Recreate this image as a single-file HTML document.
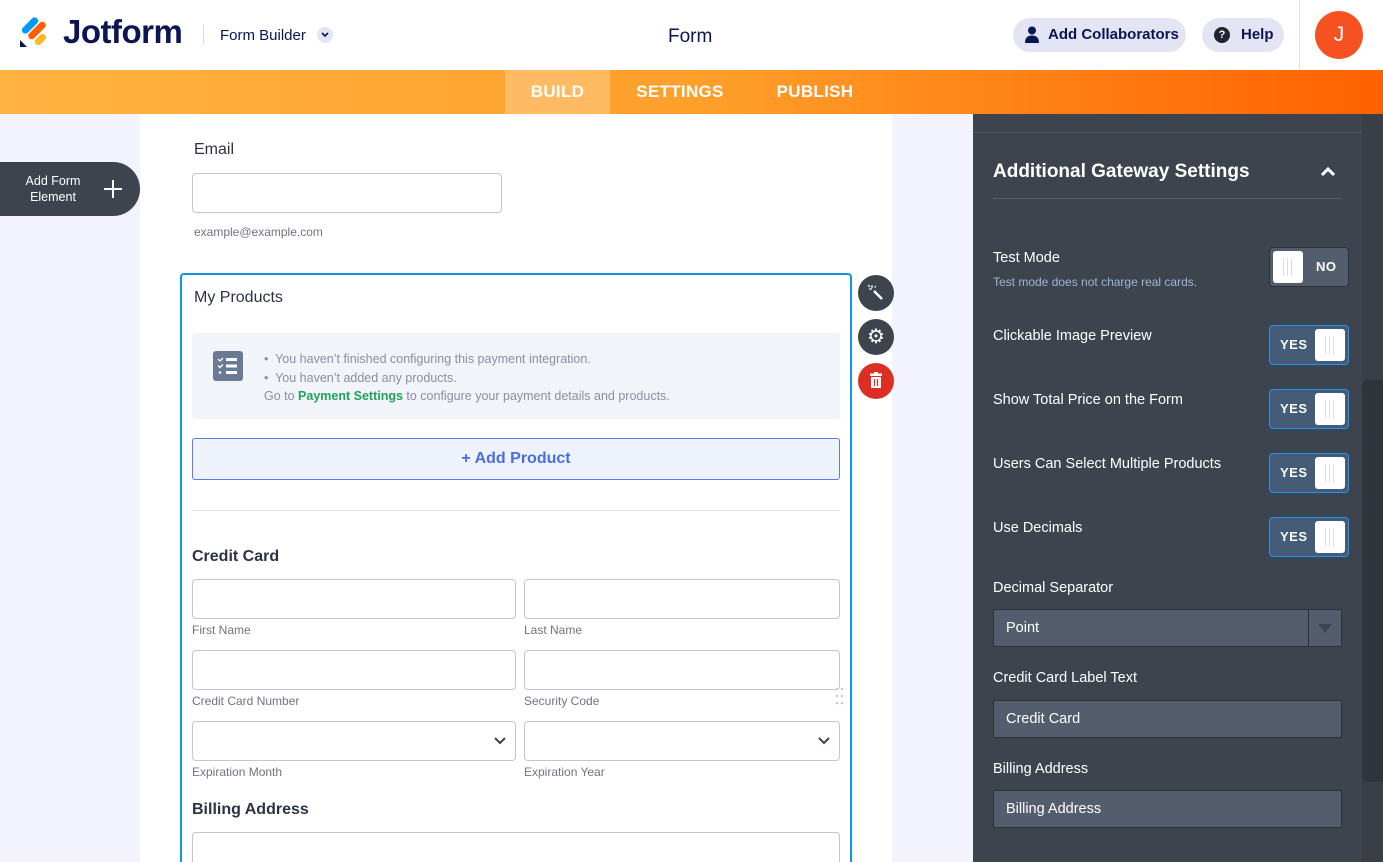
<!DOCTYPE html>
<html><head><meta charset="utf-8"><style>
*{box-sizing:border-box;margin:0;padding:0}
html,body{width:1383px;height:862px;overflow:hidden}
body{font-family:"Liberation Sans",sans-serif;background:#f3f3fe;position:relative}
.hdr{position:absolute;left:0;top:0;width:1383px;height:70px;background:#fff}
.bar{position:absolute;left:0;top:70px;width:1383px;height:44px;background:linear-gradient(90deg,#ffb340,#ffa02b 50%,#ff6100)}
.tab{position:absolute;top:70px;height:44px;line-height:44px;color:#fff;font-size:17px;font-weight:bold;text-align:center;letter-spacing:.3px}
.abs{position:absolute}
.card{position:absolute;left:140px;top:114px;width:752px;height:748px;background:#fff}
.inp{position:absolute;border:1px solid #c3c5d4;border-radius:4px;background:#fff}
.sub{position:absolute;font-size:12px;color:#6f7486}
.rp{position:absolute;left:973px;top:114px;width:410px;height:748px;background:#3e444e}
.lbl{position:absolute;left:993px;color:#fff;font-size:14.5px}
.tg{position:absolute;left:1269px;width:80px;height:40px;border-radius:4px;border:1px solid #1a97f5;background:#445c78}
.tg b{position:absolute;left:10px;top:11px;color:#fff;font-size:13px;letter-spacing:.5px}
.knob{position:absolute;width:30px;height:32px;top:3px;background:#fff;border-radius:3px}
.knob i{position:absolute;top:7px;width:1px;height:18px;background:#ddd}
.dinp{position:absolute;left:993px;width:349px;height:38px;background:#535d6e;border:1px solid #2c3038;border-radius:2px;color:#fff;font-size:14.5px;padding:10px 12px}
</style></head><body>
<div class="hdr"></div>
<svg class="abs" style="left:18px;top:16px" width="32" height="32" viewBox="0 0 32 32">
<rect x="2" y="6" width="20" height="7" rx="3.5" transform="rotate(-45 12 9.5)" fill="#0099ff"/>
<rect x="8" y="11" width="22" height="7" rx="3.5" transform="rotate(-45 19 14.5)" fill="#ff6100"/>
<rect x="16" y="20" width="13" height="7" rx="3.5" transform="rotate(-45 22.5 23.5)" fill="#ffb629"/>
<path d="M2 24 L9 31 L2 31 Z" fill="#0a1551"/>
</svg>
<div class="abs" style="left:63px;top:13px;font-size:33px;font-weight:bold;color:#0a1551;letter-spacing:-.5px">Jotform</div>
<div class="abs" style="left:203px;top:25px;width:1px;height:20px;background:#d8dae6"></div>
<div class="abs" style="left:220px;top:27px;font-size:15px;color:#0a1551">Form Builder</div>
<div class="abs" style="left:317px;top:27px;width:16px;height:16px;border-radius:50%;background:#e3e5f5"></div>
<svg class="abs" style="left:321px;top:32px" width="8" height="6"><path d="M1 1l3 3 3-3" stroke="#0a1551" stroke-width="1.6" fill="none"/></svg>
<div class="abs" style="left:668px;top:26px;font-size:19px;color:#0a1551">Form</div>
<div class="abs" style="left:1013px;top:18px;width:173px;height:34px;border-radius:17px;background:#e3e5f5"></div>
<svg class="abs" style="left:1025px;top:26px" width="14" height="17" viewBox="0 0 14 17"><circle cx="7" cy="4.5" r="4" fill="#0a1551"/><path d="M0 17 Q0 9.5 7 9.5 Q14 9.5 14 17Z" fill="#0a1551"/></svg>
<div class="abs" style="left:1048px;top:26px;font-size:15px;font-weight:bold;color:#0a1551">Add Collaborators</div>
<div class="abs" style="left:1202px;top:18px;width:82px;height:34px;border-radius:17px;background:#e3e5f5"></div>
<div class="abs" style="left:1214px;top:27px;width:16px;height:16px;border-radius:50%;background:#1e2430;color:#fff;font-size:11px;font-weight:bold;text-align:center;line-height:16px">?</div>
<div class="abs" style="left:1241px;top:26px;font-size:15px;font-weight:bold;color:#0a1551">Help</div>
<div class="abs" style="left:1299px;top:0;width:1px;height:70px;background:#e0e0e0"></div>
<div class="abs" style="left:1315px;top:11px;width:48px;height:48px;border-radius:50%;background:#f65121;color:#fff;font-size:21px;text-align:center;line-height:48px">J</div>

<div class="bar"></div>
<div class="tab" style="left:505px;width:105px;background:rgba(255,255,255,.25)">BUILD</div>
<div class="tab" style="left:625px;width:110px">SETTINGS</div>
<div class="tab" style="left:765px;width:100px">PUBLISH</div>

<div class="abs" style="left:0;top:162px;width:140px;height:54px;border-radius:0 27px 27px 0;background:#3e444e"></div>
<div class="abs" style="left:18px;top:173px;width:70px;color:#fff;font-size:12.5px;text-align:center;line-height:16px">Add Form Element</div>
<div class="abs" style="left:104px;top:188px;width:18px;height:2px;background:#fff"></div>
<div class="abs" style="left:112px;top:180px;width:2px;height:18px;background:#fff"></div>

<div class="card"></div>
<div class="abs" style="left:194px;top:141px;font-size:16px;color:#2c3345">Email</div>
<div class="inp" style="left:192px;top:173px;width:310px;height:40px"></div>
<div class="sub" style="left:194px;top:225px">example@example.com</div>

<div class="abs" style="left:180px;top:273px;width:672px;height:589px;border:2px solid #0f95e0;border-bottom:none;border-radius:4px 4px 0 0"></div>
<div class="abs" style="left:194px;top:289px;font-size:16px;color:#2c3345">My Products</div>
<div class="abs" style="left:192px;top:333px;width:648px;height:86px;background:#f1f4f9;border-radius:3px"></div>
<svg class="abs" style="left:213px;top:351px" width="30" height="30" viewBox="0 0 30 30"><rect width="30" height="30" rx="3" fill="#6b7a94"/><rect x="13" y="7" width="11" height="3" fill="#fff"/><rect x="13" y="13.5" width="11" height="3" fill="#fff"/><rect x="13" y="20" width="11" height="3" fill="#fff"/><path d="M5 8l2 2 3-3M5 14.5l2 2 3-3" stroke="#fff" stroke-width="1.3" fill="none"/><circle cx="7" cy="21.5" r="1.3" fill="#fff"/></svg>
<div class="abs" style="left:264px;top:350px;font-size:12.5px;color:#8a8fa3;line-height:19px">•&nbsp; You haven’t finished configuring this payment integration.<br>•&nbsp; You haven’t added any products.</div>
<div class="abs" style="left:264px;top:389px;font-size:12.5px;color:#8a8fa3">Go to <b style="color:#22a35a">Payment Settings</b> to configure your payment details and products.</div>
<div class="abs" style="left:192px;top:438px;width:648px;height:42px;background:#edf2fd;border:1px solid #5b7de8;border-radius:3px;text-align:center;line-height:40px;color:#4a6ee0;font-size:16px;font-weight:bold">+ Add Product</div>
<div class="abs" style="left:192px;top:510px;width:648px;height:1px;background:#e3e5ea"></div>

<div class="abs" style="left:192px;top:548px;font-size:16px;font-weight:bold;color:#2c3345">Credit Card</div>
<div class="inp" style="left:192px;top:579px;width:324px;height:40px"></div>
<div class="inp" style="left:524px;top:579px;width:316px;height:40px"></div>
<div class="sub" style="left:192px;top:623px">First Name</div>
<div class="sub" style="left:524px;top:623px">Last Name</div>
<div class="inp" style="left:192px;top:650px;width:324px;height:40px"></div>
<div class="inp" style="left:524px;top:650px;width:316px;height:40px"></div>
<div class="sub" style="left:192px;top:694px">Credit Card Number</div>
<div class="sub" style="left:524px;top:694px">Security Code</div>
<div class="inp" style="left:192px;top:721px;width:324px;height:40px"></div>
<div class="inp" style="left:524px;top:721px;width:316px;height:40px"></div>
<svg class="abs" style="left:494px;top:737px" width="12" height="8"><path d="M1 1l5 5 5-5" stroke="#3e444e" stroke-width="2" fill="none"/></svg>
<svg class="abs" style="left:818px;top:737px" width="12" height="8"><path d="M1 1l5 5 5-5" stroke="#3e444e" stroke-width="2" fill="none"/></svg>
<div class="sub" style="left:192px;top:765px">Expiration Month</div>
<div class="sub" style="left:524px;top:765px">Expiration Year</div>
<div class="abs" style="left:192px;top:801px;font-size:16px;font-weight:bold;color:#2c3345">Billing Address</div>
<div class="inp" style="left:192px;top:832px;width:648px;height:40px"></div>

<div class="abs" style="left:858px;top:275px;width:36px;height:36px;border-radius:50%;background:#3e444e"></div>
<svg class="abs" style="left:867px;top:284px" width="18" height="18" viewBox="0 0 18 18"><path d="M7 7l8 8" stroke="#fff" stroke-width="2.5"/><path d="M5 1v3M2 5h3M1 1l2 2M9 2l-1.5 1.5" stroke="#fff" stroke-width="1.2"/></svg>
<div class="abs" style="left:858px;top:319px;width:36px;height:36px;border-radius:50%;background:#3e444e;color:#fff;text-align:center;line-height:36px;font-size:20px">&#9881;</div>
<div class="abs" style="left:858px;top:363px;width:36px;height:36px;border-radius:50%;background:#dc2e22"></div>
<svg class="abs" style="left:869px;top:372px" width="14" height="17" viewBox="0 0 14 17"><rect x="1" y="1.5" width="12" height="2.5" fill="#fff"/><rect x="5" y="0" width="4" height="2" fill="#fff"/><path d="M2 5h10v11H2z" fill="#fff"/><path d="M5.5 7v7M8.5 7v7" stroke="#dc2e22" stroke-width="1.2"/></svg>
<svg class="abs" style="left:835px;top:686px" width="10" height="20"><g fill="#c9cbd6"><circle cx="2" cy="3" r="1.3"/><circle cx="7" cy="3" r="1.3"/><circle cx="2" cy="10" r="1.3"/><circle cx="7" cy="10" r="1.3"/><circle cx="2" cy="17" r="1.3"/><circle cx="7" cy="17" r="1.3"/></g></svg>

<div class="rp"></div>
<div class="abs" style="left:973px;top:132px;width:390px;height:1px;background:#4c535f"></div>
<div class="abs" style="left:1362px;top:114px;width:21px;height:748px;background:#3a3f47"></div>
<div class="abs" style="left:1362px;top:380px;width:21px;height:402px;background:#2f333a;border-radius:6px 0 0 6px"></div>
<div class="abs" style="left:993px;top:161px;color:#fff;font-size:19px;font-weight:bold">Additional Gateway Settings</div>
<svg class="abs" style="left:1320px;top:166px" width="16" height="11"><path d="M2 9l6-6 6 6" stroke="#fff" stroke-width="3" fill="none"/></svg>
<div class="abs" style="left:993px;top:198px;width:349px;height:1px;background:#58606c"></div>

<div class="lbl" style="top:250px">Test Mode</div>
<div class="abs" style="left:993px;top:275px;color:#9db4d8;font-size:12px">Test mode does not charge real cards.</div>
<div class="tg" style="top:247px;background:#535d6e;border-color:#2c3038"><div class="knob" style="left:3px"><i style="left:10px"></i><i style="left:14px"></i><i style="left:18px"></i></div><b style="left:46px">NO</b></div>

<div class="lbl" style="top:328px">Clickable Image Preview</div>
<div class="tg" style="top:325px"><b>YES</b><div class="knob" style="left:45px"><i style="left:10px"></i><i style="left:14px"></i><i style="left:18px"></i></div></div>
<div class="lbl" style="top:392px">Show Total Price on the Form</div>
<div class="tg" style="top:389px"><b>YES</b><div class="knob" style="left:45px"><i style="left:10px"></i><i style="left:14px"></i><i style="left:18px"></i></div></div>
<div class="lbl" style="top:456px">Users Can Select Multiple Products</div>
<div class="tg" style="top:453px"><b>YES</b><div class="knob" style="left:45px"><i style="left:10px"></i><i style="left:14px"></i><i style="left:18px"></i></div></div>
<div class="lbl" style="top:520px">Use Decimals</div>
<div class="tg" style="top:517px"><b>YES</b><div class="knob" style="left:45px"><i style="left:10px"></i><i style="left:14px"></i><i style="left:18px"></i></div></div>

<div class="lbl" style="top:580px">Decimal Separator</div>
<div class="dinp" style="top:609px">Point</div>
<div class="abs" style="left:1308px;top:610px;width:1px;height:36px;background:#2c3038"></div>
<svg class="abs" style="left:1318px;top:624px" width="14" height="10"><path d="M0 0h14L7 9z" fill="#3e444e"/></svg>
<div class="lbl" style="top:670px">Credit Card Label Text</div>
<div class="dinp" style="top:700px">Credit Card</div>
<div class="lbl" style="top:761px">Billing Address</div>
<div class="dinp" style="top:790px">Billing Address</div>
</body></html>
